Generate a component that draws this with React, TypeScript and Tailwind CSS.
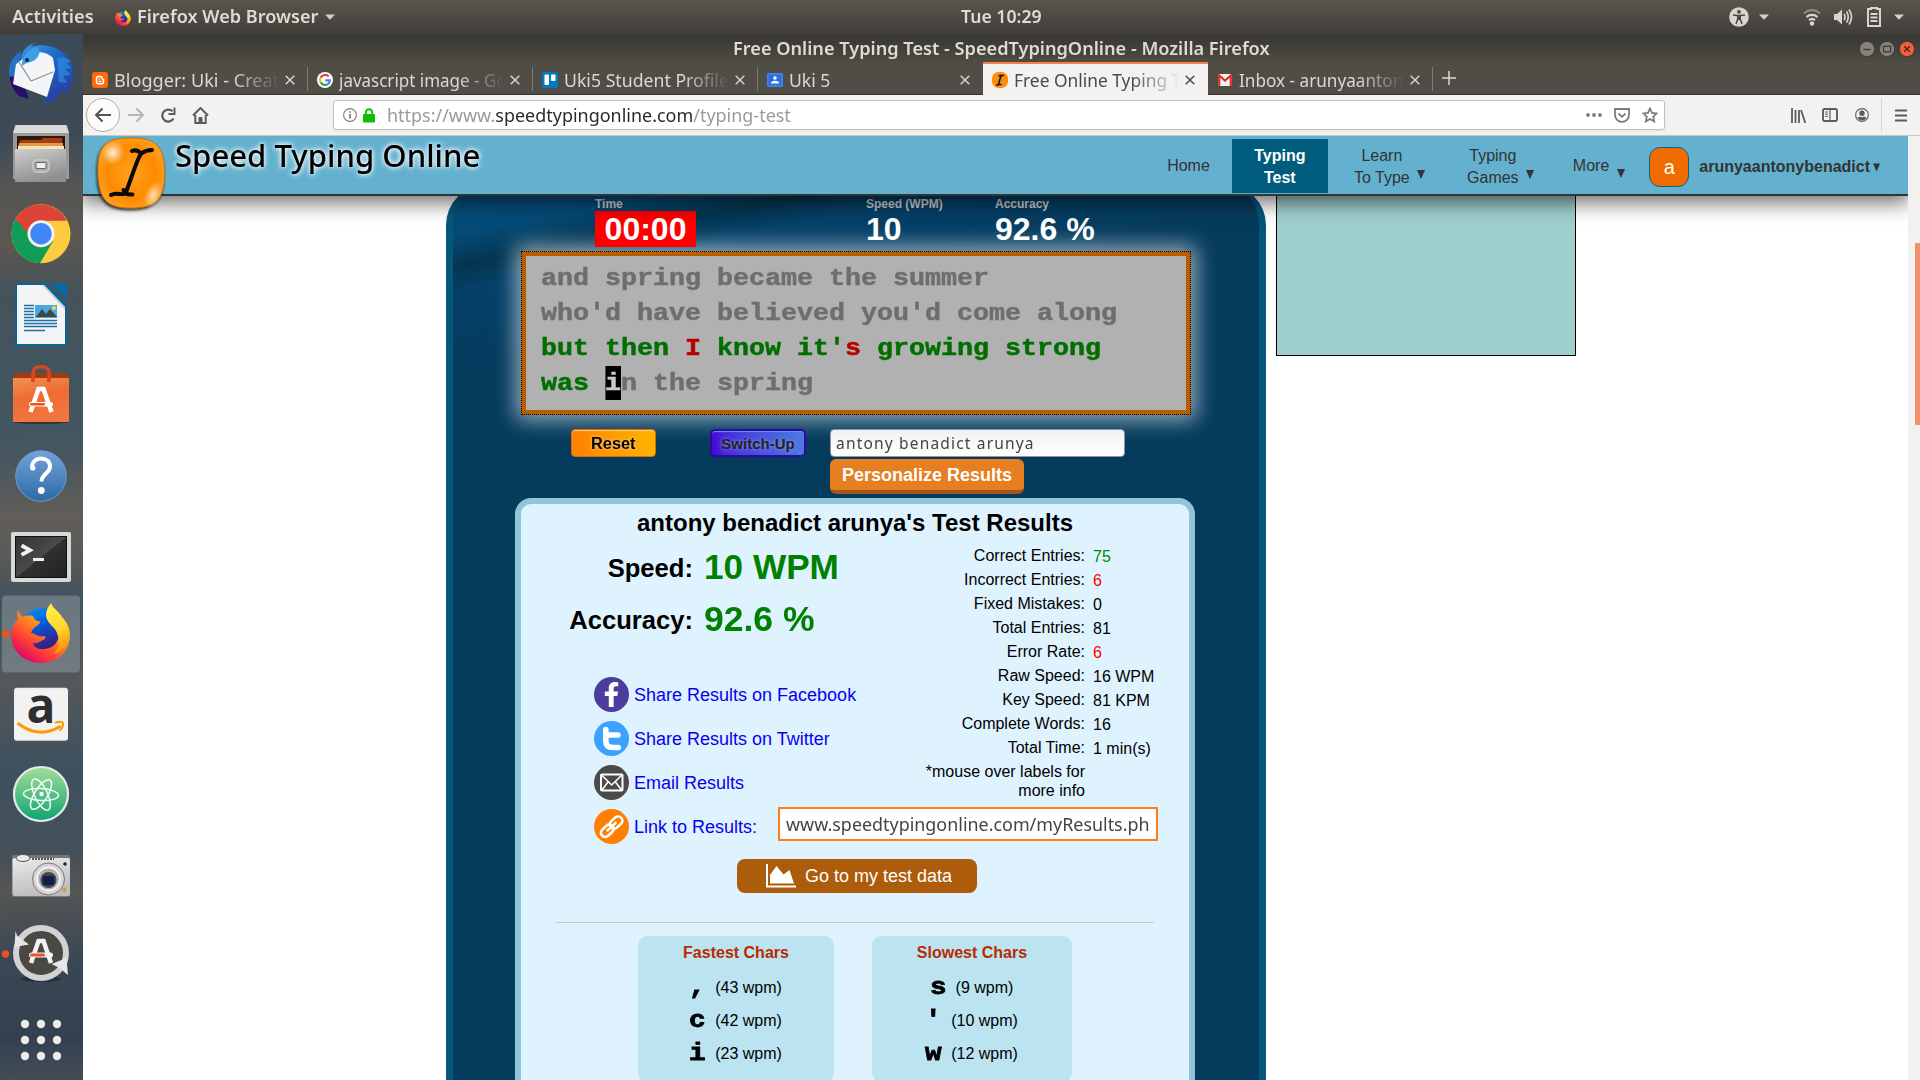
import React, { useLayoutEffect, useRef, useState } from 'react';
import { FaFacebookF } from 'react-icons/fa';

/** Keeps a run of text at a fixed width, whatever the metrics of the font. */
function Fit({ w, className = '', children }: { w: number; className?: string; children: React.ReactNode }) {
  const ref = useRef<HTMLSpanElement>(null);
  const [scale, setScale] = useState(1);
  useLayoutEffect(() => {
    if (ref.current) setScale(w / ref.current.offsetWidth);
  }, [w]);
  return (
    <span className={'inline-block text-left whitespace-nowrap ' + className} style={{ width: w }}>
      <span ref={ref} className="inline-block origin-left" style={{ transform: `scaleX(${scale})` }}>
        {children}
      </span>
    </span>
  );
}

function Caret({ className = '' }: { className?: string }) {
  return (
    <svg className={className} width="10" height="6" viewBox="0 0 10 6">
      <path d="M0 0.5h10L5 5.7z" fill="#d3d1cb" />
    </svg>
  );
}

function FirefoxLogo({ size }: { size: number }) {
  return (
    <svg width={size} height={size} viewBox="0 0 60 60">
      <defs>
        <linearGradient id="ffBody" x1="0.8" y1="0" x2="0.1" y2="0.9">
          <stop offset="0" stopColor="#ffd93b" />
          <stop offset="0.4" stopColor="#ff8a1c" />
          <stop offset="0.7" stopColor="#ff3a3a" />
          <stop offset="1" stopColor="#d6006e" />
        </linearGradient>
        <linearGradient id="ffGlobe" x1="0" y1="0" x2="0.4" y2="1">
          <stop offset="0" stopColor="#0a9bff" />
          <stop offset="0.5" stopColor="#0557d6" />
          <stop offset="1" stopColor="#3a1a80" />
        </linearGradient>
        <linearGradient id="ffTail" x1="0" y1="0" x2="0.2" y2="1">
          <stop offset="0" stopColor="#fff44f" />
          <stop offset="0.6" stopColor="#ffd52e" />
          <stop offset="1" stopColor="#ff980e" />
        </linearGradient>
      </defs>
      <circle cx="31" cy="27" r="22" fill="url(#ffGlobe)" />
      <path
        d="M7 7c-1 3-1 6 0 9C3 20 0 27 0 33c1 16 14 27 30 27 17 0 29-12 29-28 0-7-3-13-8-18 2 8 1 16-4 22-3 8-9 10-16 10-4 0-8-2-9-6 4 1 6-1 10-3 2-1 3-2 2-4-7 2-10-3-14-3 1-4 4-6 7-8 2-2 3-3 1-4-3 0-5-2-6-5-4-1-8 0-10 1-2-1-4-4-5-7z"
        fill="url(#ffBody)"
      />
      <path d="M40 0c2 6 8 8 11 14 6 9 9 17 6 25-3 6-8 10-14 12 5-6 6-13 3-21-2-6-11-10-11-18 0-5 3-9 5-12z" fill="url(#ffTail)" />
    </svg>
  );
}

const dockTops = [34, 111, 189.8, 267, 345, 423, 501.5, 584, 660.700, 736.5, 813, 890, 966];

const dockIcons: React.ReactNode[] = [
  // Thunderbird
  <g key="tb">
    <defs>
      <linearGradient id="tb" x1="0" y1="0" x2="0.6" y2="1">
        <stop offset="0" stopColor="#3a9be8" />
        <stop offset="0.5" stopColor="#1c62c4" />
        <stop offset="1" stopColor="#2a3fa0" />
      </linearGradient>
    </defs>
    <path d="M11 64c-3 12-1 24 8 32l10 3-6-16z" fill="#2a0d6b" />
    <path d="M21 60c0-9 6-15 14-17l-5 4c19-6 37 3 42 19 3 12 0 22-8 30 1-3 1-5 0-7-5 9-12 14-20 15l5-5-7 1c5-6 10-12 10-22L36 54c-6-3-9 0-12 4z" fill="url(#tb)" />
    <path d="M9 76c-1-12 4-20 12-25l-1 14-7 12z" fill="#2670cc" />
    <path d="M16 64l12-9c9-5 20-3 25 3l2 12-8 27-34-13z" fill="#f4f5f6" />
    <path d="M19 62l12 19 22-9" fill="none" stroke="#8d9297" strokeWidth="1.2" />
    <path d="M22 63c1-9 8-14 14-16 4 2 5 7 0 12-4 4-8 2-14 7z" fill="#3f9fe6" />
    <circle cx="27" cy="60" r="2" fill="#10284d" />
    <path d="M57 58c6-2 11 0 14 4l-5 1 6 5-7 1 6 6-8 1 4 7-8-1" fill="#2b8ee0" opacity="0.7" />
  </g>,
  // Files
  <g key="fi">
    <defs>
      <linearGradient id="fi" x1="0" y1="0" x2="0.4" y2="1">
        <stop offset="0" stopColor="#cfcfcf" />
        <stop offset="1" stopColor="#8f8f8f" />
      </linearGradient>
    </defs>
    <path d="M15 123h52l2 8v46H13v-46z" fill="#9a9a9a" />
    <path d="M16 123h50l3 8H13z" fill="#dadada" />
    <rect x="17" y="134" width="48" height="14" fill="#33170b" />
    <path d="M20 138h21l2-2h19v12H19z" fill="#a3400f" />
    <path d="M19 141h44v7H18z" fill="#e09a4e" />
    <path d="M18 144h46v3H18z" fill="#fbe3b4" />
    <rect x="15" y="147" width="51" height="33" rx="1" fill="url(#fi)" />
    <rect x="33" y="158" width="16" height="12" rx="4" fill="#a9a9a9" stroke="#cdcdcd" strokeWidth="1.4" />
    <rect x="36" y="160.500" width="10" height="6" rx="1" fill="#f0f0f0" stroke="#666" strokeWidth="1" />
  </g>,
  // Chrome
  <g key="ch">
    <circle cx="41" cy="231.500" r="29.500" fill="#fccb3f" />
    <path d="M15.500 216.800A29.500 29.500 0 0 1 66.600 217.500L66 218.500H41z" fill="#db4437" />
    <path d="M15.500 216.800A29.500 29.500 0 0 0 40 261l13-22-12-8z" fill="#109d58" />
    <path d="M66.500 218.300H41l-13 13-12.500-14.500" fill="#db4437" />
    <circle cx="41" cy="231.500" r="13.500" fill="#f3f3f3" />
    <circle cx="41" cy="231.500" r="10.700" fill="#4285f4" />
  </g>,
  // Writer
  <g key="wr">
    <path d="M15 279h31l21 21v42H15z" fill="#0b6394" />
    <path d="M50 279h17v17z" fill="#0a68a3" />
    <path d="M17 281h27l21 22v37H17z" fill="#f3f4f5" />
    <path d="M44 281l21 22v3L42 281z" fill="#c6d0d6" />
    <g stroke="#1e6fa3" strokeWidth="1.300">
      <path d="M24 301.500h10M24 304.500h10M24 307.500h10M24 310.500h10M24 313.500h10M24 316.500h33M24 319.500h33M24 322.500h33M24 326.500h21" />
    </g>
    <rect x="35" y="301" width="22" height="13" fill="#4aa6dc" />
    <path d="M36 313l6-8 4 5 4-5 7 8z" fill="#3c4a42" />
    <circle cx="54" cy="304" r="2" fill="#f7d93b" />
  </g>,
  // Software
  <g key="so">
    <defs>
      <linearGradient id="so" x1="0" y1="0" x2="0.3" y2="1">
        <stop offset="0" stopColor="#ee9355" />
        <stop offset="0.5" stopColor="#ef6b33" />
        <stop offset="1" stopColor="#f0763f" />
      </linearGradient>
    </defs>
    <ellipse cx="41" cy="417" rx="28" ry="2" fill="#20262b" opacity="0.7" />
    <path d="M15 368h52l2 6H13z" fill="#a53a10" />
    <rect x="13" y="373" width="56" height="44" fill="url(#so)" />
    <path d="M33 377v-9q0-5 5-6h6q5 1 5 6v9" fill="none" stroke="#d4491b" strokeWidth="3.600" />
    <path d="M30.500 407l8-23h5l8 23" fill="none" stroke="#fff" strokeWidth="4.500" />
    <rect x="29" y="397" width="24" height="4.600" rx="2.300" fill="#fff" />
    <rect x="30" y="398" width="15" height="2.600" rx="1.300" fill="#e95420" />
  </g>,
  // Help
  <g key="he">
    <defs>
      <linearGradient id="he" x1="0" y1="0" x2="0" y2="1">
        <stop offset="0" stopColor="#74a3dd" />
        <stop offset="1" stopColor="#2c6aa4" />
      </linearGradient>
    </defs>
    <circle cx="41" cy="470" r="25.300" fill="url(#he)" stroke="#6f9ccc" strokeWidth="1" />
    <path d="M32 462c0-6 4-9.500 9-9.500s9 3 9 8c0 7-8.500 7-8.500 15" fill="none" stroke="#fff" strokeWidth="4" />
    <circle cx="32.800" cy="462" r="2.600" fill="#fff" />
    <circle cx="41.300" cy="484.500" r="3.400" fill="#fff" />
  </g>,
  // Terminal
  <g key="te">
    <defs>
      <linearGradient id="te" x1="0" y1="0" x2="1" y2="1">
        <stop offset="0" stopColor="#333" />
        <stop offset="0.5" stopColor="#4a4a4a" />
        <stop offset="0.51" stopColor="#303030" />
        <stop offset="1" stopColor="#222" />
      </linearGradient>
    </defs>
    <rect x="11" y="525.500" width="60" height="50" rx="2" fill="#d8d8d8" />
    <rect x="15.500" y="530" width="51" height="41" fill="url(#te)" stroke="#111" />
    <path d="M21.500 539l8.500 4.700-8.500 4.700" fill="none" stroke="#f0f0f0" strokeWidth="3.800" />
    <path d="M33 553h11" stroke="#f0f0f0" strokeWidth="3" />
  </g>,
  // Firefox
  <g key="ff">
    <rect x="2" y="592.500" width="78" height="77" rx="4" fill="#8c979d" opacity="0.55" />
    <circle cx="5.500" cy="631" r="3.700" fill="#e95420" />
    <g transform="translate(11 600)">
      <FirefoxLogo size={60} />
    </g>
  </g>,
  // Amazon
  <g key="am">
    <rect x="14" y="682.500" width="54" height="53" rx="3" fill="#ececec" />
    <rect x="14" y="684.500" width="54" height="50" rx="3" fill="#f6f6f6" opacity="0.6" />
    <text x="41" y="718" textAnchor="middle" fontSize="48" fontWeight="700" fontFamily="Open Sans, sans-serif" fill="#2e2e2e">a</text>
    <path d="M18.500 718.500c13 10 28 11 41 3" fill="none" stroke="#ff9900" strokeWidth="3" strokeLinecap="round" />
    <path d="M55 717.500c3-1.500 7-1.500 8 0 .5 2-1 6-3.500 8" fill="none" stroke="#ff9900" strokeWidth="2" />
  </g>,
  // Atom
  <g key="at">
    <defs>
      <linearGradient id="at" x1="0" y1="0" x2="0" y2="1">
        <stop offset="0" stopColor="#a3dd98" />
        <stop offset="1" stopColor="#0ea372" />
      </linearGradient>
    </defs>
    <circle cx="41" cy="785.500" r="27" fill="url(#at)" stroke="#e6e9e6" strokeWidth="2.200" />
    <g fill="none" stroke="#f2fbf4" strokeWidth="1.500">
      <ellipse cx="41" cy="786" rx="17.500" ry="6" transform="rotate(3 41 786)" />
      <ellipse cx="41" cy="786" rx="17" ry="6.500" transform="rotate(65 41 786)" />
      <ellipse cx="41" cy="786" rx="17" ry="6.500" transform="rotate(-58 41 786)" />
    </g>
    <circle cx="41.500" cy="785.500" r="2.200" fill="#fff" />
  </g>,
  // Camera
  <g key="ca">
    <defs>
      <linearGradient id="ca" x1="0" y1="0" x2="0.3" y2="1">
        <stop offset="0" stopColor="#ececec" />
        <stop offset="1" stopColor="#bdbdbd" />
      </linearGradient>
    </defs>
    <rect x="12" y="844" width="58" height="42" rx="2" fill="#777" />
    <rect x="12.500" y="847" width="57.500" height="38" rx="2" fill="url(#ca)" />
    <ellipse cx="23" cy="847" rx="7" ry="3.500" fill="#e8e8e8" stroke="#555" strokeWidth="1" />
    <path d="M32 848h22" stroke="#555" strokeWidth="2" strokeDasharray="2 1" />
    <circle cx="48.500" cy="868" r="16" fill="#d5d5d5" stroke="#777" strokeWidth="1" />
    <circle cx="48.500" cy="868" r="11.500" fill="#b0b0b0" stroke="#f2f2f2" strokeWidth="2" />
    <circle cx="48.500" cy="869" r="8" fill="#444" />
    <rect x="43" y="865" width="11" height="9" rx="1" fill="#0d1f4a" />
    <circle cx="65" cy="853" r="1.800" fill="#222" />
    <rect x="62.500" y="877" width="3.500" height="4" fill="#e09a2c" />
  </g>,
  // Updater
  <g key="up">
    <ellipse cx="41" cy="966" rx="20" ry="3" fill="#1b242c" opacity="0.6" />
    <circle cx="41" cy="940" r="25" fill="#4a4844" stroke="#d2d2d2" strokeWidth="6" />
    <path d="M15.500 918l1.500 4.500 12 9-14.500 2.500z" fill="#e6e6e6" />
    <path d="M68 962l-1.500-17-15 6 8 4z" fill="#e6e6e6" />
    <path d="M31 950l7.500-22h5L51 950" fill="none" stroke="#f2f2f2" strokeWidth="4.500" />
    <rect x="29" y="939.500" width="24" height="5" rx="2.500" fill="#f2f2f2" />
    <rect x="30" y="940.500" width="15" height="3" rx="1.500" fill="#e95420" />
    <circle cx="5.500" cy="941" r="3.700" fill="#e95420" />
  </g>,
  // Show applications
  <g key="ap" fill="#ecebea">
    {[1008, 1024, 1040].map((y) => [25, 41, 57].map((x) => <circle key={x + '-' + y} cx={x} cy={y} r="4.200" />))}
  </g>,
];

function Dock() {
  return (
    <nav className="flex w-[83px] shrink-0 flex-col bg-[linear-gradient(178deg,#3c4b58_0%,#3d4a55_10%,#575654_15%,#5b5751_20%,#46525a_25%,#415560_33%,#45565f_40%,#615e59_46%,#595a58_50%,#41525e_54%,#54585a_62%,#3e515e_70%,#44505a_78%,#555554_82%,#3a4855_88%,#33414f_96%,#444d57_100%)]">
      {dockIcons.map((icon, i) => (
        <svg key={i} className="block h-[79px] w-[83px] shrink-0 overflow-visible" viewBox={`0 ${dockTops[i]} 83 79`}>
          {icon}
        </svg>
      ))}
    </nav>
  );
}

function TopBar() {
  return (
    <header className="flex h-[34px] shrink-0 items-center bg-linear-to-b from-[#5a564e] to-[#403e39] font-['Noto_Sans',sans-serif] text-[17px] font-semibold text-[#dfdbd2]">
      <Fit w={82} className="ml-3">Activities</Fit>
      <span className="mt-[1px] ml-[21px] mr-[6px] flex"><FirefoxLogo size={16} /></span>
      <Fit w={181}>Firefox Web Browser</Fit>
      <Caret className="ml-[7px]" />
      <span className="ml-[626px]" />
      <Fit w={81}>Tue 10:29</Fit>
      <svg className="ml-auto" width="20" height="20" viewBox="0 0 20 20">
        <circle cx="10" cy="10" r="9.800" fill="#d8d5ce" />
        <circle cx="10" cy="4.800" r="1.900" fill="#4a4842" />
        <path d="M4 8l4.500.6h3L16 8M9 9l-.4 3.500-1.600 4.500M11 9l.4 3.500 1.600 4.500" stroke="#4a4842" strokeWidth="1.500" fill="none" />
        <path d="M8.200 8.500h3.600v4.500H8.200z" fill="#4a4842" />
      </svg>
      <Caret className="mx-[10px] w-[10px]" />
      <svg className="ml-[24px]" width="18" height="18" viewBox="0 0 18 18" fill="none" strokeWidth="2.200">
        <path d="M1 5.500a11 11 0 0 1 16 0" stroke="#8d8a83" />
        <path d="M3.500 9a8 8 0 0 1 11 0M6 12.200a4.500 4.500 0 0 1 6 0" stroke="#d8d5ce" />
        <circle cx="9" cy="15.500" r="2.200" fill="#d8d5ce" />
      </svg>
      <svg className="ml-[12px]" width="20" height="18" viewBox="0 0 20 18" fill="none" stroke="#d8d5ce" strokeWidth="1.700">
        <path d="M1 6h3l5-4.500v15L4 12H1z" fill="#d8d5ce" stroke="none" />
        <path d="M11 6q2 3 0 6M13.500 3.500q3.500 5.500 0 11M16 1.500q5 7.500 0 15" />
      </svg>
      <svg className="ml-[13px]" width="16" height="20" viewBox="0 0 16 20" fill="none" stroke="#d8d5ce">
        <path d="M5 2V1h6v1h3v17H2V2z" strokeWidth="2" />
        <path d="M4.500 7h7M4.500 10.500h7M4.500 14h7" strokeWidth="2" />
      </svg>
      <Caret className="mr-[16px] ml-[12px]" />
    </header>
  );
}

type TabProps = { icon: React.ReactNode; label: string; w: number; active?: boolean; fade?: boolean; sep?: boolean };

function Tab({ icon, label, w, active, fade = true, sep = true }: TabProps) {
  return (
    <div
      className={
        'relative flex h-[33px] w-[225px] shrink-0 items-center pl-[9px] ' +
        (active ? 'border-t-2 border-[#f0814f] bg-[#f3f2f0] text-[#4a4a4a]' : 'pt-[2px] text-[#dcd9d2]')
      }
    >
      <span className="flex w-[22px] shrink-0">{icon}</span>
      <span
        className={
          'h-6 w-[168px] shrink-0 overflow-hidden leading-6 ' +
          (fade ? '[mask-image:linear-gradient(to_right,#000_118px,transparent_166px)]' : '')
        }
      >
        <Fit w={w}>{label}</Fit>
      </span>
      <svg className="ml-[3px]" width="10" height="10" viewBox="0 0 10 10">
        <path d="M.7.7l8.600 8.600M9.300.7L.7 9.300" stroke={active ? '#4a4a4a' : '#d5d2cb'} strokeWidth="1.500" />
      </svg>
      {sep && <span className="absolute top-[5px] right-0 h-6 w-px bg-[#7d7a73]" />}
    </div>
  );
}

function SiteIcon({ size }: { size: number }) {
  return (
    <svg width={size} height={size} viewBox="0 0 16 16">
      <rect width="16" height="16" rx="6.500" fill="#ff8c0a" />
      <path d="M6.500 3.500q2 .5 3-.5M9 3.500l-2.500 9M9 3.500h3M4 13q2 .3 2.500-.5M6.500 12.500h3" stroke="#111" strokeWidth="1.500" fill="none" />
    </svg>
  );
}

function BrowserTop() {
  return (
    <div className="flex h-[61px] shrink-0 flex-col border-b border-[#33322e] bg-linear-to-b from-[#3b3934] from-[8%] to-[#504d46] to-[50%] font-['Noto_Sans',sans-serif]">
      <div className="flex h-[27px] items-center text-[17px] font-semibold text-[#dfdbd2]">
        <Fit w={537} className="mt-[3px] ml-[650px]">Free Online Typing Test - SpeedTypingOnline - Mozilla Firefox</Fit>
        <div className="mt-[2px] mr-[5px] ml-auto flex gap-[4px]">
          <svg width="16" height="16" viewBox="0 0 16 16"><circle cx="8" cy="8" r="7.600" fill="#85827b" stroke="#383631" strokeWidth=".8" /><path d="M4.500 8.500h7" stroke="#3a3833" strokeWidth="1.300" /></svg>
          <svg width="16" height="16" viewBox="0 0 16 16"><circle cx="8" cy="8" r="7.600" fill="#85827b" stroke="#383631" strokeWidth=".8" /><rect x="4.600" y="5.200" width="7" height="5.600" fill="none" stroke="#3a3833" strokeWidth="1.200" /></svg>
          <svg width="16" height="16" viewBox="0 0 16 16"><circle cx="8" cy="8" r="7.600" fill="#ee6239" stroke="#383631" strokeWidth=".8" /><path d="M5.200 5.200l5.600 5.600M10.800 5.200l-5.600 5.600" stroke="#46231a" strokeWidth="1.300" /></svg>
        </div>
      </div>
      <div className="mt-[1px] flex h-[33px] text-[18px]">
        <Tab
          w={165}
          label="Blogger: Uki - Creat"
          icon={<svg width="16" height="16" viewBox="0 0 16 16"><rect width="16" height="16" rx="3" fill="#ff6a0a" /><path d="M6.200 4.500h2q1.800 0 1.800 1.700 0 1.300 1.500 1.300v2.200q0 2-2 2H6.200q-1.700 0-1.700-2V6.300q0-1.800 1.700-1.800z" fill="none" stroke="#fff" strokeWidth="1.500" /><path d="M6.500 9.300h3M6.500 6.800h1.500" stroke="#fff" strokeWidth="1.200" /></svg>}
        />
        <Tab
          w={168}
          label="javascript image - Go"
          icon={<svg width="16" height="16" viewBox="0 0 16 16"><circle cx="8" cy="8" r="8" fill="#fff" /><g fill="none" strokeWidth="2.200"><path d="M11.800 4.600A5 5 0 0 0 3.600 5.800" stroke="#ea4335" /><path d="M3.600 5.800a5 5 0 0 0 0 4.400" stroke="#fbbc05" /><path d="M3.600 10.200a5 5 0 0 0 7.600 1.600" stroke="#34a853" /><path d="M11.200 11.800a5 5 0 0 0 1.700-3.500H8.200" stroke="#4285f4" /></g></svg>}
        />
        <Tab
          w={165}
          label="Uki5 Student Profile"
          icon={<svg width="16" height="16" viewBox="0 0 16 16"><rect width="16" height="16" rx="2.500" fill="#0079bf" /><rect x="2.500" y="2.500" width="4.500" height="10.500" rx="1" fill="#fff" /><rect x="9" y="2.500" width="4.500" height="6.500" rx="1" fill="#fff" /></svg>}
        />
        <Tab
          w={41}
          label="Uki 5"
          fade={false}
          sep={false}
          icon={<svg width="16" height="14" viewBox="0 0 16 14"><rect width="16" height="14" rx="1.500" fill="#4285f4" /><rect x="1.500" y="1.500" width="13" height="11" fill="#2a6fe0" /><circle cx="8" cy="5" r="1.800" fill="#fff" /><path d="M4 10.500q0-2.700 4-2.700t4 2.700z" fill="#fff" /></svg>}
        />
        <Tab w={167} label="Free Online Typing T" active sep={false} icon={<SiteIcon size={16} />} />
        <Tab
          w={164}
          label="Inbox - arunyaanton"
          icon={<svg className="ml-[1px]" width="14" height="12" viewBox="0 0 14 12"><rect width="14" height="12" rx="1" fill="#f2f2f2" /><path d="M1.200 12V1.500L7 6.500l5.800-5V12" fill="none" stroke="#d93025" strokeWidth="2.200" /></svg>}
        />
        <svg className="mt-[9px] ml-[9px]" width="14" height="14" viewBox="0 0 14 14"><path d="M7 0v14M0 7h14" stroke="#dcd9d2" strokeWidth="1.500" /></svg>
      </div>
    </div>
  );
}

function UrlBar() {
  return (
    <div className="flex h-[41px] shrink-0 items-center border-b border-[#c9c7c4] bg-[#f3f2f0]">
      <div className="ml-[3px] flex size-[34px] items-center justify-center rounded-full border border-[#adadab] bg-[#fcfcfb]">
        <svg width="18" height="16" viewBox="0 0 18 16" fill="none" stroke="#555" strokeWidth="2"><path d="M17 8H2M8.500 1.500L2 8l6.500 6.500" /></svg>
      </div>
      <svg className="ml-[8px]" width="17" height="16" viewBox="0 0 17 16" fill="none" stroke="#b5b4b2" strokeWidth="2"><path d="M0 8h15M8.500 1.500L15 8l-6.500 6.500" /></svg>
      <svg className="ml-[15px]" width="17" height="16" viewBox="0 0 17 16" fill="none" stroke="#5c5c5c" strokeWidth="2.200"><path d="M13.500 11.500A6 6 0 1 1 12.500 4.300" /><path d="M14.500 0.500v6.500H8.500" strokeWidth="2" /></svg>
      <svg className="ml-[15px]" width="17" height="17" viewBox="0 0 17 17" fill="none" stroke="#5c5c5c" strokeWidth="2"><path d="M1 8.500L8.500 1 16 8.500M3.300 8v8h10.400V8" /><path d="M7 15.500v-5h3v5z" fill="#5c5c5c" strokeWidth="1" /></svg>
      <div className="ml-[124px] flex h-[30px] w-[1332px] shrink-0 items-center rounded-[3px] border border-[#c3c2c0] bg-white font-['Noto_Sans',sans-serif] text-[18px] text-[#9a9a9a] shadow-[0_1px_2px_rgba(0,0,0,.08)]">
        <svg className="ml-[9px]" width="14" height="14" viewBox="0 0 14 14" fill="none" stroke="#7b7b7b"><circle cx="7" cy="7" r="6.400" strokeWidth="1.100" /><path d="M7 6v4.500M7 3.300v1.500" strokeWidth="1.700" /></svg>
        <svg className="ml-[6px]" width="12" height="15" viewBox="0 0 12 15"><rect y="6" width="12" height="8.500" rx="1" fill="#12bc00" /><path d="M2.800 7V4.500a3.200 3.200 0 0 1 6.400 0V7" fill="none" stroke="#12bc00" strokeWidth="2" /></svg>
        <Fit w={404} className="ml-[12px]">
          https://www.<span className="text-[#2a2a2a]">speedtypingonline.com</span>/typing-test
        </Fit>
        <svg className="ml-auto" width="16" height="4" viewBox="0 0 16 4" fill="#7b7b7b"><circle cx="2" cy="2" r="1.900" /><circle cx="8" cy="2" r="1.900" /><circle cx="14" cy="2" r="1.900" /></svg>
        <svg className="ml-[12px]" width="16" height="15" viewBox="0 0 16 15" fill="none" stroke="#7b7b7b" strokeWidth="1.800"><path d="M1 1h14v6a7 6.800 0 0 1-14 0zM4.500 5.500L8 8.800l3.500-3.300" /></svg>
        <svg className="mr-[6px] ml-[12px]" width="16" height="16" viewBox="0 0 16 16" fill="none" stroke="#7b7b7b" strokeWidth="1.700"><path d="M8 1.500l2 4.400 4.700.5-3.500 3.200 1 4.900L8 12l-4.200 2.500 1-4.900L1.300 6.400 6 5.900z" /></svg>
      </div>
      <svg className="ml-[126px]" width="15" height="15" viewBox="0 0 15 15" fill="none" stroke="#5c5c5c" strokeWidth="1.800"><path d="M1 0v15M4.500 2v13M8 2v13M10 2l4.300 13" /></svg>
      <svg className="ml-[16px]" width="16" height="14" viewBox="0 0 16 14" fill="none" stroke="#5c5c5c"><rect x="1" y="1" width="14" height="12" rx="1.500" strokeWidth="1.900" /><path d="M8 1v12" strokeWidth="1.200" /><path d="M3 4h3M3 6.200h3M3 8.400h3" strokeWidth="1" /></svg>
      <svg className="ml-[17px]" width="14" height="14" viewBox="0 0 14 14"><circle cx="7" cy="7" r="6.400" fill="none" stroke="#5c5c5c" strokeWidth="1.100" /><circle cx="7" cy="5.200" r="2.700" fill="#5c5c5c" /><path d="M2.500 9q1.500.5 2.500-.5 2 1.500 4 0 1 1 2.500.5-1 3.500-4.500 3.500T2.500 9z" fill="#5c5c5c" /></svg>
      <span className="ml-[12px] h-[34px] w-px bg-[#d6d5d3]" />
      <svg className="ml-[13px]" width="12" height="13" viewBox="0 0 12 13"><path d="M0 1.500h12M0 6.500h12M0 11.500h12" stroke="#5c5c5c" strokeWidth="1.900" /></svg>
    </div>
  );
}

function Down({ className = '' }: { className?: string }) {
  return (
    <svg className={className} width="8" height="9" viewBox="0 0 8 9">
      <path d="M0 0h8L4 9z" fill="#333" />
    </svg>
  );
}

function SiteHeader() {
  return (
    <header className="relative z-10 flex h-[60px] w-[1825px] shrink-0 border-b-2 border-[#333] bg-[#64b1cf] shadow-[0_4px_20px_2px_rgba(0,0,0,.6)] font-['Liberation_Sans',sans-serif] text-[16px] leading-[22px] text-[#333]">
      <svg className="ml-[10px] h-[80px] w-[76px] shrink-0 overflow-visible" viewBox="93 136 76 80">
        <defs>
          <radialGradient id="sg" cx="0.5" cy="0.5" r="0.6">
            <stop offset="0" stopColor="#ffa21f" />
            <stop offset="0.6" stopColor="#ff8a00" />
            <stop offset="1" stopColor="#ffa62b" />
          </radialGradient>
          <radialGradient id="sh">
            <stop offset="0" stopColor="#fff" stopOpacity=".85" />
            <stop offset="1" stopColor="#fff" stopOpacity="0" />
          </radialGradient>
          <filter id="sd" x="-20%" y="-20%" width="140%" height="150%">
            <feDropShadow dx="-1" dy="2" stdDeviation="1.500" floodColor="#000" floodOpacity=".8" />
          </filter>
        </defs>
        <path d="M131 138c24 0 33 7 33.500 33 .5 27-7 37-34 37-25 0-32-10-32.500-36-.5-27 8-34 33-34z" fill="url(#sg)" stroke="#c66a00" strokeWidth=".8" filter="url(#sd)" />
        <ellipse cx="113" cy="153" rx="11" ry="12" fill="url(#sh)" transform="rotate(35 113 153)" />
        <ellipse cx="153" cy="195" rx="8" ry="14" fill="url(#sh)" transform="rotate(20 153 195)" opacity=".8" />
        <path d="M132 151q5-2 9 2.500 5-3.500 11-3.500M141 153.500q-3 5-9 22t-6 17q-1 2-6 1.500-6-1-9 1M123.500 190q1 5 9 4.500" fill="none" stroke="#0a0a0a" strokeWidth="4" strokeLinecap="round" />
      </svg>
      <span className="mt-[-2px] ml-[6px] font-['Noto_Sans',sans-serif] text-[31px] leading-[42px] font-medium text-black [text-shadow:0_0_4px_#fff,0_0_6px_#fff]">
        <Fit w={305}>Speed Typing Online</Fit>
      </span>
      <nav className="ml-auto flex h-[58px] items-center text-center">
        <span className="mt-[2px] mr-[22px]">Home</span>
        <span className="mt-[1px] flex h-[54px] w-[96px] flex-col justify-center bg-[#005c7c] pt-[2px] font-bold text-white">
          <span>Typing</span>
          <span>Test</span>
        </span>
        <span className="mt-[3px] ml-[26px] w-[56px] whitespace-nowrap">Learn<br />To Type</span>
        <Down className="mt-[18px] ml-[7px]" />
        <span className="mt-[3px] ml-[42px] w-[52px]">Typing<br />Games</span>
        <Down className="mt-[18px] ml-[7px]" />
        <span className="mt-[2px] ml-[39px]">More</span>
        <Down className="mt-[16px] ml-[8px]" />
        <span className="mt-[3px] ml-[24px] flex h-[40px] w-[40px] items-center justify-center rounded-[11px] border border-[#0b6480] bg-[#f06c00] text-[20px] text-white">a</span>
        <span className="mt-[4px] ml-[10px] font-bold">arunyaantonybenadict</span>
        <Down className="mt-[4px] mr-[28px] ml-[3px] w-[7px]" />
      </nav>
    </header>
  );
}

function TypingBox() {
  return (
    <div className="ml-[68px] h-[164px] w-[670px] border border-dotted border-black bg-[#b55e00] p-[4px] shadow-[0_0_20px_5px_rgba(225,235,245,.65)]">
      <div className="h-full w-full bg-[#b1b1b1] pt-[5px] pl-[15px]">
        <div className="w-[550px] origin-left scale-x-[1.111] font-['Liberation_Mono',monospace] text-[24px] leading-[35px] font-bold whitespace-pre text-[#6e6e6e] [-webkit-text-stroke:0.5px_currentColor]">
          <div>and spring became the summer</div>
          <div>who'd have believed you'd come along</div>
          <div className="text-[#006f00]">
            but then <span className="text-[#b80000]">I</span> know it'<span className="text-[#b80000]">s</span> growing strong
          </div>
          <div>
            <span className="text-[#006f00]">was </span>
            <span className="inline-block h-[34px] bg-black align-top leading-[35px] text-[#c9c9c9]">i</span>n the spring
          </div>
        </div>
      </div>
    </div>
  );
}

function Controls() {
  return (
    <div className="mt-[14px] flex h-[69px] pl-[118px]">
      <button className="h-[28px] w-[85px] rounded-[4px] border border-[#e06a00] bg-linear-to-r from-[#ff8000] to-[#ffb300] text-[16px] leading-[28px] font-bold text-black shadow-[inset_0_1px_1px_#ffd070] [text-shadow:0_0_3px_#ffd890]"><Fit w={45}>Reset</Fit></button>
      <button className="ml-[54px] h-[28px] w-[96px] rounded-[5px] border-2 border-[#3205a8] bg-linear-to-r from-[#4500d8] to-[#4f78e0] text-[15px] leading-[25px] font-bold whitespace-nowrap text-[#222] shadow-[inset_0_1px_1px_#5aa0e0] [text-shadow:0_0_4px_#8aa0f0]">Switch-Up</button>
      <div className="ml-[24px] flex flex-col items-start">
        <div className="flex h-[28px] w-[295px] items-center rounded-[4px] border border-[#8b98a3] bg-linear-to-b from-[#f1f1f1] to-white pl-[5px] font-['Noto_Sans',sans-serif] text-[16px] text-[#444]">
          <Fit w={199} className="tracking-[1.2px]">antony benadict arunya</Fit>
        </div>
        <button className="mt-[2px] h-[35px] w-[194px] rounded-[6px] border-b-4 border-[#a4561b] bg-[#e67e22] text-[18px] leading-[33px] font-bold whitespace-nowrap text-white">Personalize Results</button>
      </div>
    </div>
  );
}

const stats: [string, string, string][] = [
  ['Correct Entries:', '75', 'text-[#008a00]'],
  ['Incorrect Entries:', '6', 'text-[#ff0000]'],
  ['Fixed Mistakes:', '0', ''],
  ['Total Entries:', '81', ''],
  ['Error Rate:', '6', 'text-[#ff0000]'],
  ['Raw Speed:', '16 WPM', ''],
  ['Key Speed:', '81 KPM', ''],
  ['Complete Words:', '16', ''],
  ['Total Time:', '1 min(s)', ''],
];

const twitter = (
  <svg width="35" height="35" viewBox="0 0 35 35">
    <circle cx="17.500" cy="17.500" r="17.500" fill="#3ba2ff" />
    <path d="M11.800 8.500v11q0 7 7 7h5.500M12 14h12" fill="none" stroke="#fff" strokeWidth="5.600" strokeLinecap="round" />
  </svg>
);
const facebook = (
  <span className="flex size-[35px] items-end justify-center rounded-full bg-[#4c3c9c] pb-[5px] text-white">
    <FaFacebookF size={25} />
  </span>
);
const email = (
  <svg width="35" height="35" viewBox="0 0 35 35">
    <circle cx="17.500" cy="17.500" r="17.500" fill="#4a4a4a" />
    <g fill="none" stroke="#fff" strokeWidth="1.600">
      <rect x="7" y="9.500" width="21.500" height="16" rx="1" strokeWidth="2" />
      <path d="M8 10.500l9.700 9.500 9.700-9.500M8 25l6-8M27.500 25l-6-8" />
    </g>
  </svg>
);
const link = (
  <svg width="35" height="35" viewBox="0 0 35 35">
    <circle cx="17.500" cy="17.500" r="17.500" fill="#ff8000" />
    <g fill="none" stroke="#fff" strokeWidth="2.600" transform="rotate(-43 17.500 17.500)">
      <rect x="4.500" y="13.500" width="14" height="8.500" rx="4.200" />
      <rect x="16.500" y="13.500" width="14" height="8.500" rx="4.200" />
      <path d="M12 17.700h11" strokeLinecap="round" />
    </g>
  </svg>
);

function Share({ icon, label }: { icon: React.ReactNode; label: string }) {
  return (
    <div className="flex h-[44px] items-center text-[18px] whitespace-nowrap text-[#0a00ee]">
      <span className="mb-[2px] flex">{icon}</span>
      <span className="ml-[5px]">{label}</span>
    </div>
  );
}

function CharCard({ title, width, rows }: { title: string; width: string; rows: [string, string][] }) {
  return (
    <div className={'h-[146px] rounded-[9px] bg-[#bbe3f0] pt-[7px] text-center ' + width}>
      <div className="leading-5 font-bold text-[#b82b00]">{title}</div>
      <div className="mt-[8px]">
        {rows.map(([c, t]) => (
          <div key={c} className="flex h-[33px] items-center justify-center">
            <span className="mr-[11px] inline-block w-[14px] origin-center scale-x-[1.15] font-['Liberation_Mono',monospace] text-[24px] font-bold [-webkit-text-stroke:0.8px_currentColor]">{c}</span>
            <span>{t}</span>
          </div>
        ))}
      </div>
    </div>
  );
}

function Results() {
  return (
    <section className="ml-[62px] h-[600px] w-[680px] rounded-t-[16px] border-6 border-b-0 border-[#8fc5d9] bg-[#dff3ff] text-[16px] text-black">
      <h2 className="h-[37px] text-center text-[24px] leading-[38px] font-bold">antony benadict arunya's Test Results</h2>
      <div className="flex h-[264px]">
        <div className="w-[365px]">
          <div className="flex h-[52px] items-center">
            <span className="mt-[2px] w-[172px] text-right text-[25.600px] font-bold">Speed:</span>
            <span className="ml-[11px] text-[35.200px] font-bold text-[#008000]"><Fit w={135}>10 WPM</Fit></span>
          </div>
          <div className="flex h-[52px] items-center">
            <span className="mt-[2px] w-[172px] text-right text-[25.600px] font-bold">Accuracy:</span>
            <span className="ml-[11px] text-[35.200px] font-bold text-[#008000]"><Fit w={111}>92.6 %</Fit></span>
          </div>
          <div className="mt-[28px] ml-[73px]">
            <Share icon={facebook} label="Share Results on Facebook" />
            <Share icon={twitter} label="Share Results on Twitter" />
            <Share icon={email} label="Email Results" />
          </div>
        </div>
        <div className="pt-[3px]">
          {stats.map(([k, v, c]) => (
            <div key={k} className="flex h-[24px] leading-[23px] whitespace-nowrap">
              <span className="w-[199px] text-right">{k}</span>
              <span className={'mt-[1px] ml-[8px] ' + c}>{v}</span>
            </div>
          ))}
          <p className="mt-[2px] w-[199px] pl-[30px] text-right leading-[19px]">*mouse over labels for more info</p>
        </div>
      </div>
      <div className="ml-[73px] flex h-[44px]">
        <Share icon={link} label="Link to Results:" />
        <div className="mt-[2px] ml-[21px] flex h-[34px] w-[380px] shrink-0 items-center border-2 border-[#ff7f1a] bg-white pl-[6px] font-['Noto_Sans',sans-serif] text-[18px] text-[#444]">
          <Fit w={364}>www.speedtypingonline.com/myResults.ph</Fit>
        </div>
      </div>
      <div className="mt-[10px] ml-[216px] flex h-[34px] w-[240px] items-center rounded-[8px] bg-[#ad5c0b] pl-[29px] text-[18px] whitespace-nowrap text-white">
        <svg width="30" height="24" viewBox="0 0 30 24">
          <path d="M1 0v22.500h29" fill="none" stroke="#fff" strokeWidth="2" />
          <path d="M4 19.500V11l6.500-9 7 8.500 6-4.500 4.500 13.500z" fill="#fff" />
        </svg>
        <span className="ml-[9px]">Go to my test data</span>
      </div>
      <div className="mt-[29px] ml-[35px] h-px w-[598px] bg-[#c4c8ca]" />
      <div className="mt-[13px] ml-[117px] flex gap-[38px]">
        <CharCard title="Fastest Chars" width="w-[196px]" rows={[[',', '(43 wpm)'], ['c', '(42 wpm)'], ['i', '(23 wpm)']]} />
        <CharCard title="Slowest Chars" width="w-[200px]" rows={[['s', '(9 wpm)'], ["'", '(10 wpm)'], ['w', '(12 wpm)']]} />
      </div>
    </section>
  );
}

function TypingPanel() {
  return (
    <main className="-mt-[11px] h-[900px] w-[820px] shrink-0 overflow-hidden rounded-t-[40px] border-x-[7px] border-[#05577a] bg-[#053b5c] bg-[linear-gradient(168.5deg,#05507e_0px,#054b77_50px,#043550_80px,#054068_105px,#053b5c_200px)] pt-[11px] font-['Liberation_Sans',sans-serif]">
      <div className="flex h-[55px] pl-[142px] text-[32px] leading-[36px] font-bold text-white">
        <div className="w-[271px]">
          <div className="h-[15px] text-[12px] leading-[17px] text-[#ccc]">Time</div>
          <div className="h-[36px] w-[101px] bg-[#ff0000] text-center">00:00</div>
        </div>
        <div className="w-[129px]">
          <div className="h-[15px] text-[12px] leading-[17px] text-[#ccc]">Speed (WPM)</div>
          <div>10</div>
        </div>
        <div>
          <div className="h-[15px] text-[12px] leading-[17px] text-[#ccc]">Accuracy</div>
          <div>92.6 %</div>
        </div>
      </div>
      <TypingBox />
      <Controls />
      <Results />
    </main>
  );
}

export default function App() {
  return (
    <div className="flex h-[1080px] w-[1920px] flex-col overflow-hidden bg-white">
      <TopBar />
      <div className="flex min-h-0 flex-1">
        <Dock />
        <div className="flex w-[1837px] flex-col">
          <BrowserTop />
          <UrlBar />
          <div className="flex min-h-0 flex-1 overflow-hidden">
            <div className="flex w-[1825px] flex-col overflow-hidden">
              <SiteHeader />
              <div className="flex items-start pl-[363px]">
                <TypingPanel />
                <aside className="ml-[10px] h-[160px] w-[300px] border border-t-0 border-black bg-[#9fcfcf]" />
              </div>
            </div>
            <div className="w-[12px] bg-[#f2f1f0] pt-[107px] pl-[7px]">
              <div className="h-[182px] w-[5px] rounded-l-[1px] bg-[#f0906c]" />
            </div>
          </div>
        </div>
      </div>
    </div>
  );
}
